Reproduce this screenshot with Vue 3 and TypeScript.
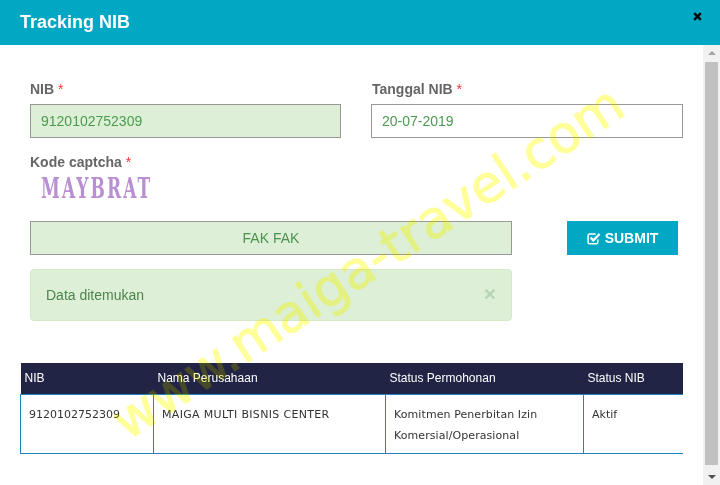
<template>
  <div class="modal">
    <!-- header -->
    <header class="modal-head">
      <h4>Tracking NIB</h4>
      <svg class="close" width="9" height="9" viewBox="0 0 9 9">
        <path d="M1.2 1.2l6.6 6.6M7.8 1.2L1.2 7.8" stroke="#000" stroke-width="2.4" />
      </svg>
    </header>

    <div class="modal-main">
      <div class="modal-body">
        <div class="form-row">
          <div class="field">
            <label>NIB <i>*</i></label>
            <input class="ok" type="text" value="9120102752309" />
          </div>
          <div class="field">
            <label class="shift">Tanggal NIB <i>*</i></label>
            <input type="text" value="20-07-2019" />
          </div>
        </div>

        <label class="captcha-label">Kode captcha <i>*</i></label>
        <div class="captcha">MAYBRAT</div>

        <div class="submit-row">
          <input class="ok center" type="text" value="FAK FAK" />
          <button class="submit">
            <svg width="14" height="13" viewBox="0 0 14 13">
              <path d="M10.8 7.5v2.7a1.6 1.6 0 0 1-1.6 1.6H2.7a1.6 1.6 0 0 1-1.6-1.6V3.7a1.6 1.6 0 0 1 1.6-1.6h6" fill="none" stroke="#fff" stroke-width="1.5" />
              <path d="M3.6 5.6l2.8 2.8L12.6 2" fill="none" stroke="#fff" stroke-width="2.3" />
            </svg>
            SUBMIT
          </button>
        </div>

        <div class="alert">
          <span>Data ditemukan</span>
          <b class="alert-x">&times;</b>
        </div>

        <div class="table-wrap">
          <table>
            <colgroup>
              <col v-for="w in colWidths" :key="w" :style="{ width: w + 'px' }" />
            </colgroup>
            <thead>
              <tr>
                <th v-for="h in heads" :key="h">{{ h }}</th>
              </tr>
            </thead>
            <tbody>
              <tr>
                <td>9120102752309</td>
                <td class="company">MAIGA MULTI BISNIS CENTER</td>
                <td class="permohonan">Komitmen Penerbitan Izin<br />Komersial/Operasional</td>
                <td>Aktif</td>
              </tr>
            </tbody>
          </table>
        </div>
      </div>

      <!-- scrollbar -->
      <div class="scrollbar">
        <span class="arrow up"></span>
        <span class="thumb"></span>
        <span class="arrow down"></span>
      </div>
    </div>

    <div class="watermark">www.maiga-travel.com</div>
  </div>
</template>

<script setup lang="ts">
const heads: string[] = ['NIB', 'Nama Perusahaan', 'Status Permohonan', 'Status NIB']
const colWidths: number[] = [133, 232, 198, 100]
</script>

<style>
html, body { margin: 0; background: #fff; overflow: hidden; }
</style>

<style scoped>
.modal {
  position: relative;
  width: 720px;
  height: 485px;
  overflow: hidden;
  font-family: "Liberation Sans", Arial, sans-serif;
  background: #fff;
}

.modal-head {
  height: 45px;
  background: #00a8c3;
  display: flex;
  justify-content: space-between;
  padding: 0 18px 0 20px;
  box-sizing: border-box;
}
.modal-head h4 {
  margin: 0;
  padding-top: 11px;
  font-size: 18px;
  line-height: 22px;
  font-weight: 700;
  color: #fff;
}
.close {
  margin-top: 12px;
}

.modal-main {
  display: flex;
  height: 440px;
}
.modal-body {
  flex: 1;
  min-width: 0;
  padding: 35px 20px 0 20px;
}

.form-row {
  display: grid;
  grid-template-columns: 311px 312px;
  column-gap: 30px;
  padding-left: 10px;
}
label {
  display: block;
  font-size: 14px;
  line-height: 18px;
  font-weight: 700;
  color: #666;
  margin-bottom: 6px;
}
label.shift { padding-left: 1px; }
label i { color: #f33; font-style: normal; font-weight: 400; }

input {
  display: block;
  width: 100%;
  height: 34px;
  box-sizing: border-box;
  border: 1px solid #999;
  border-radius: 0;
  background: #fff;
  padding: 0 10px;
  font: 14px "Liberation Sans", Arial, sans-serif;
  color: #4c9a4f;
  outline: none;
}
input.ok { background: #deefd8; }
input.center { text-align: center; width: 482px; color: #4f9050; }

.captcha-label {
  margin: 15px 0 0 10px;
}
.captcha {
  margin: 3px 0 0 21px;
  width: 160px;
  height: 30px;
  font-family: "DejaVu Serif Condensed", "DejaVu Serif", serif;
  font-weight: 700;
  font-size: 27px;
  line-height: 30px;
  letter-spacing: 3px;
  color: #b98fd3;
  transform: scaleX(0.7);
  transform-origin: 0 50%;
}

.submit-row {
  display: flex;
  margin: 17px 0 0 10px;
  gap: 55px;
}
.submit {
  width: 111px;
  height: 34px;
  flex: none;
  border: 0;
  background: #00a8c3;
  color: #fff;
  font: 700 14px "Liberation Sans", Arial, sans-serif;
  display: flex;
  align-items: center;
  justify-content: center;
  gap: 4px;
  padding: 0;
}

.alert {
  width: 482px;
  height: 52px;
  box-sizing: border-box;
  margin: 14px 0 0 10px;
  padding: 0 15px;
  background: #deefd8;
  border: 1px solid #d6e9c6;
  border-radius: 4px;
  color: #4c844c;
  font-size: 14px;
  display: flex;
  align-items: center;
  justify-content: space-between;
}
.alert-x {
  font-size: 21px;
  line-height: 21px;
  color: #b9d3b5;
  margin-top: -4px;
}

.table-wrap {
  margin-top: 42px;
  width: 663px;
  overflow: hidden;
}
table {
  border-collapse: collapse;
  table-layout: fixed;
  width: 663px;
}
th {
  height: 31px;
  padding: 0 4px;
  background: #212445;
  color: #fff;
  font: 400 12px "Liberation Sans", Arial, sans-serif;
  text-align: left;
  box-sizing: border-box;
}
td {
  border: 1px solid #1b87bd;
  height: 59px;
  padding: 9px 7px 0 8px;
  vertical-align: top;
  box-sizing: border-box;
  font: 11px/21px "DejaVu Sans", Verdana, sans-serif;
  color: #333;
}
td:last-child { border-right: 0; }
td.company { letter-spacing: 0.33px; }
td.permohonan { letter-spacing: 0.08px; }

.scrollbar {
  width: 17px;
  flex: none;
  background: #f1f1f1;
  display: flex;
  flex-direction: column;
  align-items: center;
}
.thumb {
  flex: 1;
  width: 13px;
  background: #c1c1c1;
  margin: 2px 0 3px;
}
.arrow {
  flex: none;
  width: 0;
  height: 0;
  border-left: 4px solid transparent;
  border-right: 4px solid transparent;
}
.arrow.up { border-bottom: 4px solid #a3a3a3; margin-top: 6px; margin-bottom: 5px; }
.arrow.down { border-top: 4px solid #505050; margin-top: 7px; margin-bottom: 6px; }

/* watermark over everything, hard-light keeps it pale on white and faint on navy */
.watermark {
  position: absolute;
  left: 101px;
  top: 401px;
  white-space: nowrap;
  font-family: "DejaVu Sans", Verdana, sans-serif;
  font-size: 52px;
  line-height: 60px;
  color: #95954d;
  -webkit-text-stroke: 1px #95954d;
  mix-blend-mode: hard-light;
  transform: rotate(-33.2deg);
  transform-origin: 0 0;
  pointer-events: none;
}
</style>
